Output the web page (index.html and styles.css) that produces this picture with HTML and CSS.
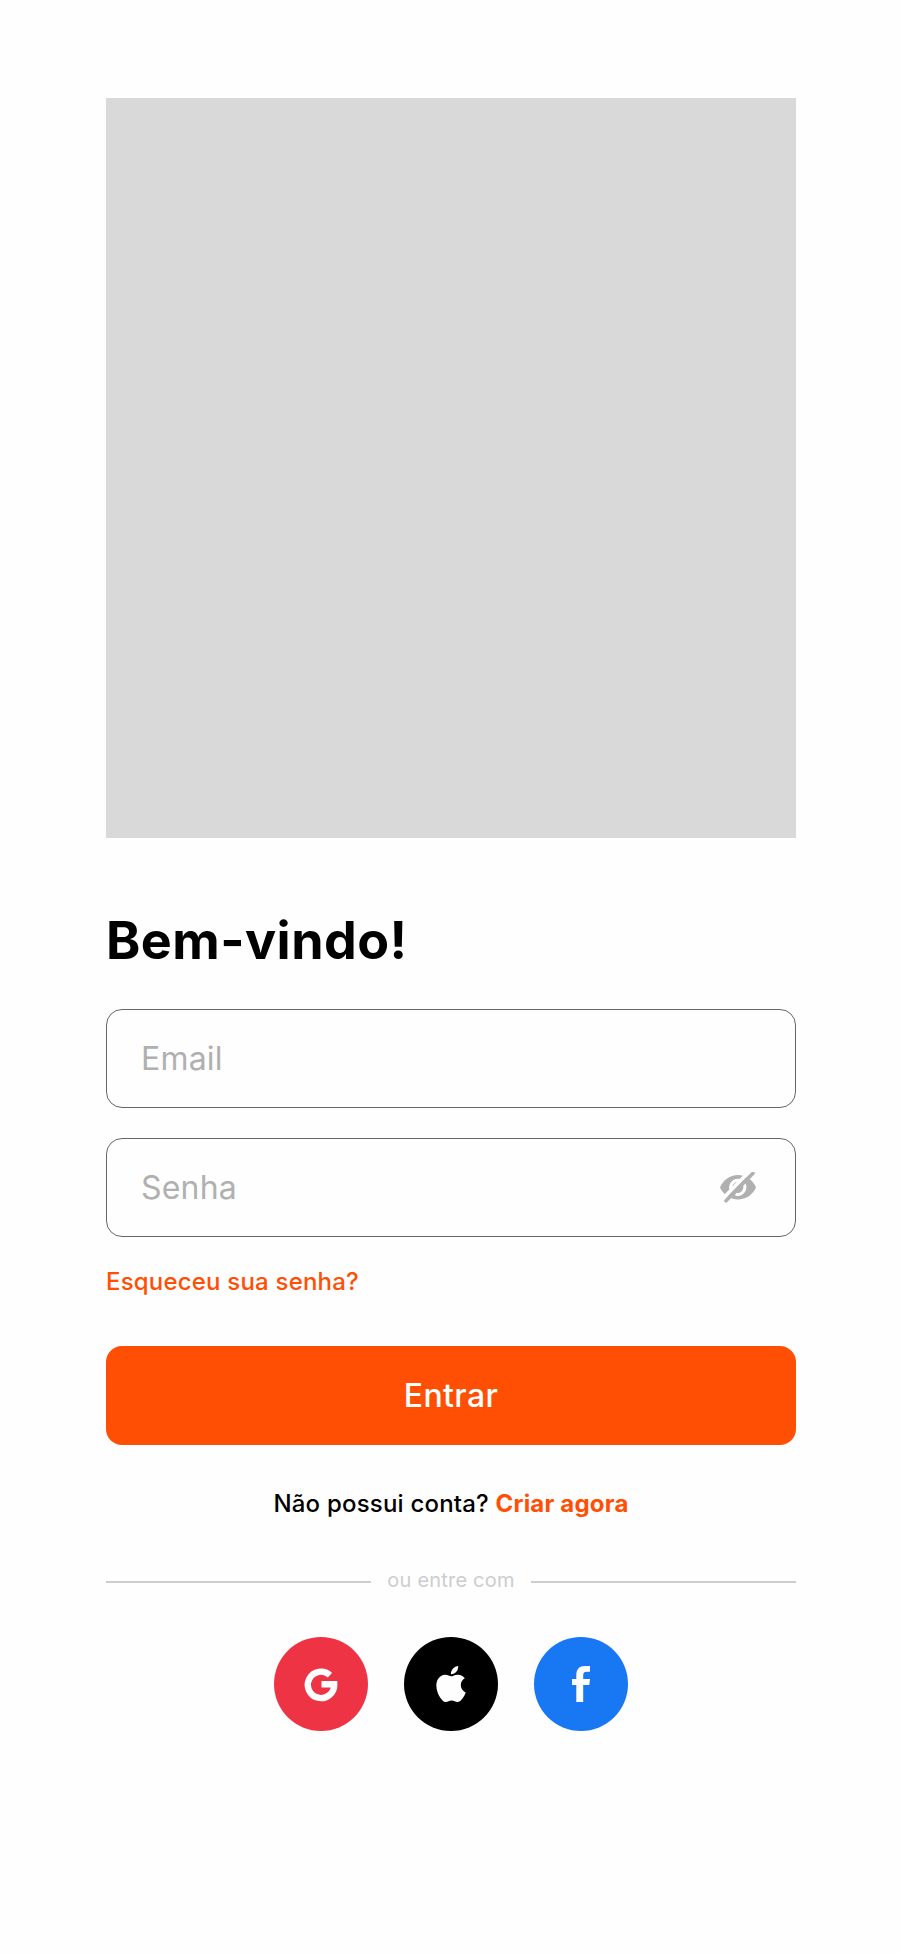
FILE: index.html
```html
<!DOCTYPE html>
<html lang="pt-BR">
<head>
<meta charset="utf-8">
<title>Entrar</title>
<link rel="stylesheet" href="styles.css">
</head>
<body>
<main class="login">
  <div class="hero"></div>
  <h1 class="title">Bem-vindo!</h1>
  <form class="form">
    <div class="field"><span class="placeholder">Email</span></div>
    <div class="field">
      <span class="placeholder">Senha</span>
      <svg class="eye" viewBox="0 0 36 32">
        <path d="M0 15.500C3 8 10 3 18 3s15 5 18 12.500C33 22.500 26 27.500 18 27.500S3 22.500 0 15.500Z" fill="#b0b0b0"/>
        <path d="M11.200 18.500A7.500 7.500 0 0 1 18 8.200L20.500 9M24.200 12A7.500 7.500 0 0 1 15.500 22.300" fill="none" stroke="#fefefe" stroke-width="3"/>
        <path class="gap" d="M3.300 26.300 30.300 -1.400"/>
        <path class="slash" d="M6 28.800 33 1.300"/>
      </svg>
    </div>
    <a class="forgot">Esqueceu sua senha?</a>
    <button class="submit" type="button">Entrar</button>
  </form>
  <p class="signup">Não possui conta? <a class="create">Criar agora</a></p>
  <div class="divider"><span class="divider-text">ou entre com</span></div>
  <div class="socials">
    <a class="social google">
      <svg class="icon" viewBox="0 0 36 36"><path d="M27 9.200A13.200 13.200 0 1 0 31.200 18.300H18.500" fill="none" stroke="#fefefe" stroke-width="6.400"/></svg>
    </a>
    <a class="social apple">
      <svg class="icon" viewBox="0 0 24 24"><path fill="#fefefe" d="M12.152 6.896c-.948 0-2.415-1.078-3.960-1.040-2.040.027-3.910 1.183-4.961 3.014-2.117 3.675-.546 9.103 1.519 12.090 1.013 1.454 2.208 3.090 3.792 3.039 1.520-.065 2.090-.987 3.935-.987 1.831 0 2.350.987 3.960.948 1.637-.026 2.676-1.480 3.676-2.948 1.156-1.688 1.636-3.325 1.662-3.415-.039-.013-3.182-1.221-3.220-4.857-.026-3.040 2.480-4.494 2.597-4.559-1.429-2.090-3.623-2.324-4.390-2.376-2-.156-3.675 1.090-4.610 1.090zM15.530 3.830c.843-1.012 1.400-2.427 1.245-3.830-1.207.052-2.662.805-3.532 1.818-.780.896-1.454 2.338-1.273 3.714 1.338.104 2.715-.688 3.559-1.701"/></svg>
    </a>
    <a class="social facebook">
      <svg class="icon" viewBox="0 0 36 36"><path fill="#fefefe" d="M13.300 36V19H9v-6h4.300V9.500C13.300 3.200 16.200 0 22 0h5v5.700h-3c-2.900 0-3.800 1-3.800 3.500V13H27l-.700 6h-6.100v17Z"/></svg>
    </a>
  </div>
</main>
</body>
</html>
```
FILE: styles.css
```css
body {
  margin: 0;
  min-height: 1953px;
  background: #fefefe;
  color: #000;
  font-family: Inter, "Liberation Sans", sans-serif;
  letter-spacing: 0.2px;
}
.login {
  width: 690px;
  margin-left: 106px;
  padding-top: 98px;
}
.hero {
  height: 740px;
  background: #d9d9d9;
}
.title {
  margin: 71px 0 0;
  font-size: 52px;
  line-height: 64px;
  font-weight: 700;
  letter-spacing: 0.45px;
}
.form {
  display: flex;
  flex-direction: column;
  margin-top: 36px;
}
.field {
  box-sizing: border-box;
  display: flex;
  align-items: center;
  justify-content: space-between;
  height: 99px;
  margin-bottom: 30px;
  padding: 0 39px 0 34px;
  border: 1px solid #666;
  border-radius: 16px;
}
.placeholder {
  color: #b0b0b0;
  font-size: 32px;
}
.eye {
  width: 36px;
  height: 32px;
}
.gap,
.slash {
  fill: none;
  stroke: #b0b0b0;
  stroke-width: 3.6;
  stroke-linecap: round;
}
.gap {
  stroke: #fefefe;
}
.forgot {
  align-self: flex-start;
  color: #ff4f04;
  font-size: 24px;
  line-height: 30px;
  font-weight: 500;
}
.submit {
  height: 99px;
  margin-top: 49px;
  border: 0;
  border-radius: 16px;
  background: #ff4f04;
  color: #fefefe;
  font: inherit;
  font-size: 32px;
  font-weight: 500;
  letter-spacing: 0.4px;
}
.signup {
  margin: 44px 0 0;
  font-size: 24px;
  line-height: 30px;
  font-weight: 500;
  text-align: center;
}
.create {
  color: #ff4f04;
  font-weight: 700;
}
.divider {
  display: flex;
  align-items: center;
  gap: 16px;
  height: 26px;
  margin-top: 50px;
  color: #cdcdcd;
}
.divider::before,
.divider::after {
  content: "";
  flex: 1;
  height: 2px;
  background: #cdcdcd;
}
.divider-text {
  padding-bottom: 3px;
  font-size: 20px;
  line-height: 23px;
}
.socials {
  display: flex;
  justify-content: center;
  gap: 36px;
  margin-top: 42px;
}
.social {
  display: flex;
  align-items: center;
  justify-content: center;
  width: 94px;
  height: 94px;
  border-radius: 50%;
}
.icon {
  width: 36px;
  height: 36px;
}
.google { background: #ee3444; }
.apple { background: #000; }
.facebook { background: #1877f2; }
```
